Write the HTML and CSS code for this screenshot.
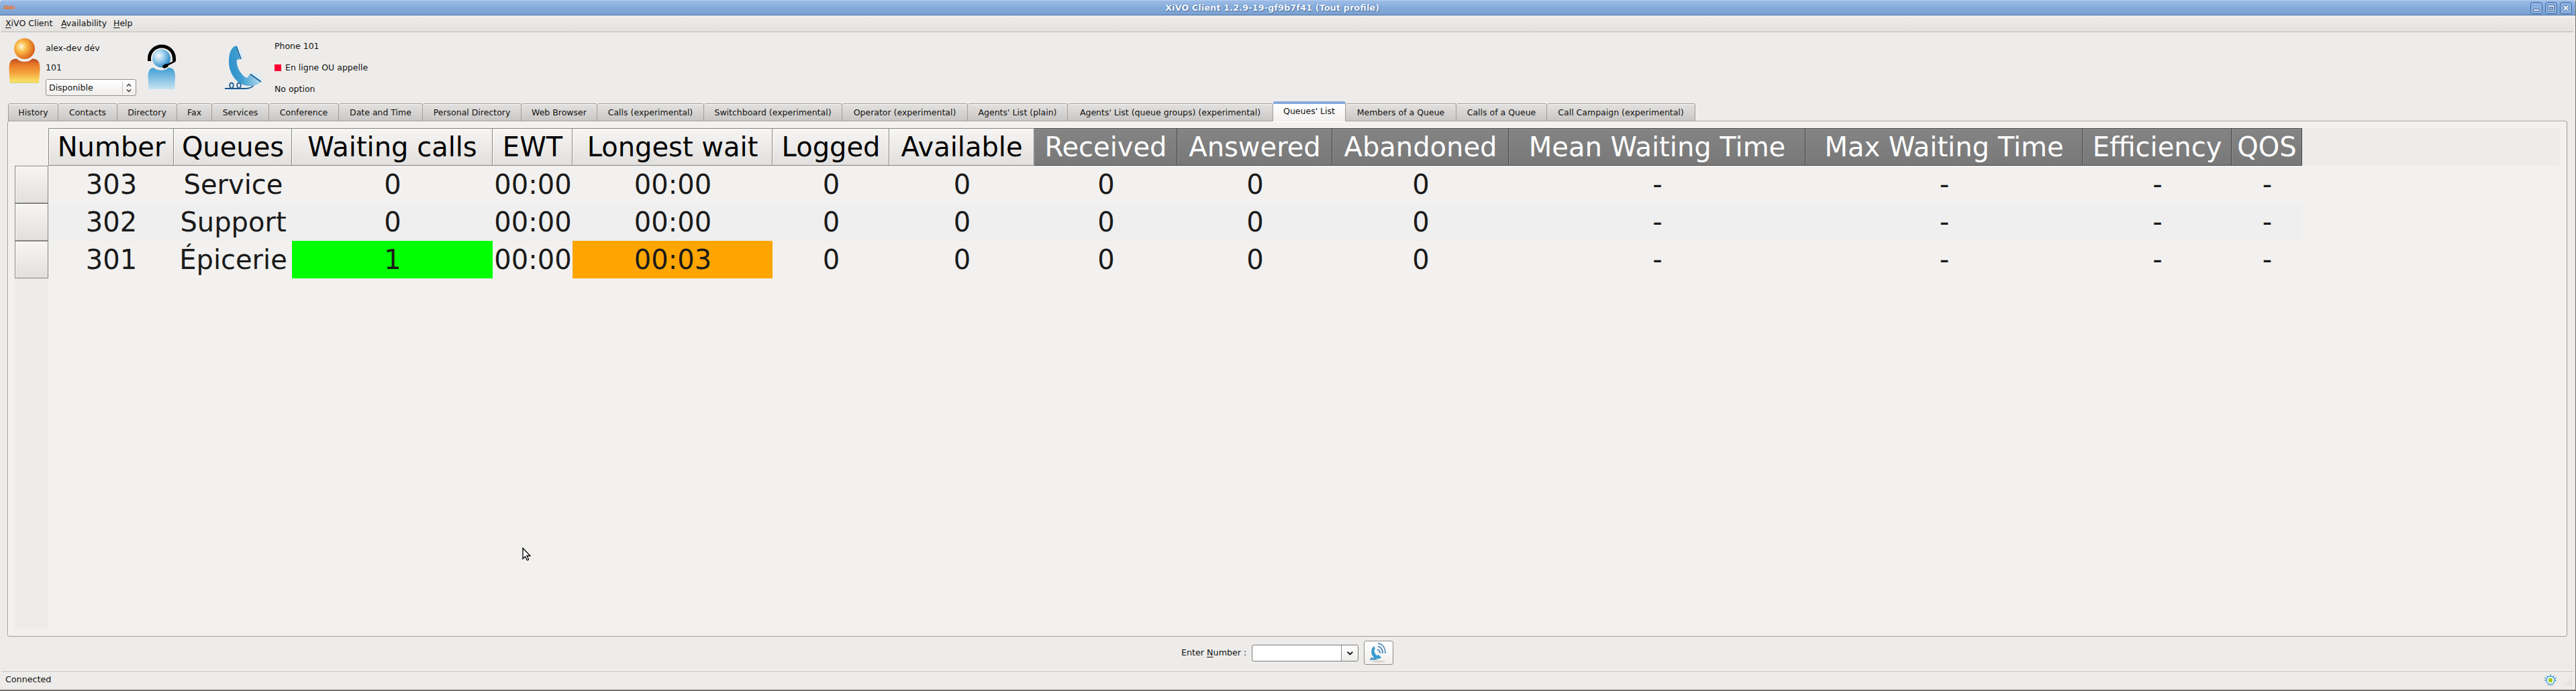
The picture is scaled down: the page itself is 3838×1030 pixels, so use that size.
FILE: index.html
```html
<!DOCTYPE html>
<html lang="en">
<head>
<meta charset="utf-8">
<title>XiVO Client</title>
<link rel="stylesheet" href="styles.css">
</head>
<body>
<header class="titlebar">
  <span class="logo">XiVO</span>
  <h1>XiVO Client 1.2.9-19-gf9b7f41 (Tout profile)</h1>
  <div class="winbtns">
    <svg width="18" height="18" viewBox="0 0 18 18"><rect x=".5" y=".5" width="17" height="17" rx="3"/><path class="g" d="M4.5 10.5h9v3h-9z"/></svg>
    <svg width="18" height="18" viewBox="0 0 18 18"><rect x=".5" y=".5" width="17" height="17" rx="3"/><path class="g" fill-rule="evenodd" d="M4.500 4.500h9v9h-9zM6.500 7.500h5v4h-5z"/></svg>
    <svg width="18" height="18" viewBox="0 0 18 18"><rect x=".5" y=".5" width="17" height="17" rx="3"/><path class="g" d="M4.500 6.500l2-2L9 7l2.500-2.500 2 2L11 9l2.500 2.500-2 2L9 11l-2.500 2.500-2-2L7 9z"/></svg>
  </div>
</header>
<nav class="menubar"><span class="m1"><u>X</u>iVO Client</span><span class="m2"><u>A</u>vailability</span><span class="m3"><u>H</u>elp</span></nav>
<section class="identity">
  <svg class="person" width="48" height="70" viewBox="0 0 48 70">
    <defs>
      <radialGradient id="oh" cx=".35" cy=".4" r=".65"><stop offset="0" stop-color="#fffbe0"/><stop offset=".4" stop-color="#f9b845"/><stop offset="1" stop-color="#d9611c"/></radialGradient>
      <linearGradient id="ob" x2="0" y2="1"><stop offset="0" stop-color="#b94b22"/><stop offset=".25" stop-color="#ea7a27"/><stop offset=".6" stop-color="#f5a640"/><stop offset=".92" stop-color="#fadf62"/><stop offset="1" stop-color="#dcd377"/></linearGradient>
    </defs>
    <ellipse cx="24.500" cy="16.500" rx="15.500" ry="15.500" fill="url(#oh)"/>
    <path d="M2.500 68L1.500 47C1.500 36 4 31.500 13 31.500c5 6 18 6 23 0 9 0 11.500 4.500 11.500 15.500L46 68z" fill="url(#ob)"/>
  </svg>
  <div class="user">
    <span class="name">alex-dev dév</span><span class="ext">101</span>
    <div class="select"><span>Disponible</span><svg width="20" height="22" viewBox="0 0 20 22"><path d="M.5 2v18" stroke="#c5c3c0"/><path d="M7 8.500l3-3 3 3M7 13.500l3 3 3-3" fill="none" stroke="#333" stroke-width="1.500"/></svg></div>
  </div>
  <svg class="agent" width="44" height="70" viewBox="0 0 44 70">
    <defs>
      <radialGradient id="bh" cx=".35" cy=".35" r=".7"><stop offset="0" stop-color="#f4fbff"/><stop offset=".5" stop-color="#90c8ea"/><stop offset="1" stop-color="#2585c4"/></radialGradient>
      <linearGradient id="bb" x2="0" y2="1"><stop offset="0" stop-color="#3f9fd2"/><stop offset="1" stop-color="#c7e2f3"/></linearGradient>
    </defs>
    <path d="M2.500 68L1.500 50c0-10 3-14 9-14 4 5 17 5 21 0 8 0 10.500 4 10.500 14l-1 18z" fill="url(#bb)"/>
    <ellipse cx="21.500" cy="22" rx="13.500" ry="13.500" fill="url(#bh)"/>
    <path d="M3.500 26v-4a18.500 18 0 0 1 37 0v4" fill="none" stroke="#000" stroke-width="5"/>
    <path d="M42 26L28 33" stroke="#000" stroke-width="2.500"/><ellipse cx="27.500" cy="33.500" rx="4.500" ry="2.800" transform="rotate(-25 27.500 33.500)"/>
  </svg>
  <svg class="phone" width="58" height="68" viewBox="0 0 58 68">
    <defs><linearGradient id="ph" x1="0" y1=".4" x2="1" y2=".2"><stop offset="0" stop-color="#2f93cb"/><stop offset=".3" stop-color="#3f9dd0"/><stop offset="1" stop-color="#d6ecf7"/></linearGradient></defs>
    <path d="M0 65h8c6 0 6-8.500 2-8.500s-4 8.500 2 8.500h7c6 0 6-8.500 2-8.500s-4 8.500 2 8.500h8q8 0 12-5" fill="none" stroke="#155a94" stroke-width="1.800"/>
    <path d="M16 1C8 5 6 15 6 25c0 18 12 35 30 36 8 0 14-2 17-5l1-1-16-12-5 6C26 47 16 33 18 22l6-1z" fill="url(#ph)"/>
    <path d="M16 1l3-1c5 5 8 14 8 20l-4 2zM38 43l3-2c6 1 12 5 15 10l-2 4z" fill="#d8edf8"/>
    <path d="M17 2l7 19M38 43.500L54 55" stroke="#13558a" stroke-width="1.600"/>
  </svg>
  <div class="line"><span>Phone 101</span><span class="status"><i></i>En ligne OU appelle</span><span>No option</span></div>
</section>
<nav class="tabs">
  <span>History</span><span>Contacts</span><span>Directory</span><span>Fax</span><span>Services</span><span>Conference</span><span>Date and Time</span><span>Personal Directory</span><span>Web Browser</span><span>Calls (experimental)</span><span>Switchboard (experimental)</span><span>Operator (experimental)</span><span>Agents' List (plain)</span><span>Agents' List (queue groups) (experimental)</span><span class="on">Queues' List</span><span>Members of a Queue</span><span>Calls of a Queue</span><span>Call Campaign (experimental)</span>
</nav>
<main class="panel">
  <div class="rowheads"><i></i><i></i><i></i></div>
  <div class="tablewrap">
  <table>
    <colgroup><col class="c1"><col class="c2"><col class="c3"><col class="c4"><col class="c5"><col class="c6"><col class="c7"><col class="c8"><col class="c9"><col class="c10"><col class="c11"><col class="c12"><col class="c13"><col class="c14"></colgroup>
    <thead><tr><th>Number</th><th>Queues</th><th>Waiting calls</th><th>EWT</th><th>Longest wait</th><th>Logged</th><th>Available</th><th class="dk">Received</th><th class="dk">Answered</th><th class="dk">Abandoned</th><th class="dk">Mean Waiting Time</th><th class="dk">Max Waiting Time</th><th class="dk">Efficiency</th><th class="dk">QOS</th></tr></thead>
    <tbody>
      <tr><td>303</td><td>Service</td><td>0</td><td>00:00</td><td>00:00</td><td>0</td><td>0</td><td>0</td><td>0</td><td>0</td><td>-</td><td>-</td><td>-</td><td>-</td></tr>
      <tr><td>302</td><td>Support</td><td>0</td><td>00:00</td><td>00:00</td><td>0</td><td>0</td><td>0</td><td>0</td><td>0</td><td>-</td><td>-</td><td>-</td><td>-</td></tr>
      <tr><td>301</td><td>Épicerie</td><td class="green">1</td><td>00:00</td><td class="orange">00:03</td><td>0</td><td>0</td><td>0</td><td>0</td><td>0</td><td>-</td><td>-</td><td>-</td><td>-</td></tr>
    </tbody>
  </table>
  </div>
</main>
<section class="dial">
  <label>Enter <u>N</u>umber :</label>
  <div class="combo"><svg width="25" height="23" viewBox="0 0 25 23"><path d="M9 9.500l4 4 4-4" fill="none" stroke="#111" stroke-width="2"/></svg></div>
  <div class="call"><svg width="28" height="30" viewBox="0 0 28 30">
    <ellipse cx="14" cy="28" rx="11" ry="1.500" fill="#d8d3cc"/>
    <path d="M7 5C2 9 2 18 7 22c4 3 8 3 11 0l-4-4-3 1C8 16 7 12 8 10l1-1z" fill="#3a9dd0"/>
    <path d="M1 25h2v-2h2v2h2v-2h2v2h2" fill="none" stroke="#2d7fb5" stroke-width="1.300"/>
    <path d="M12 10c3 1 4 3 4 6M13 5.500c5 1 7 5 7 10.500M13 1c8 1 11 8 11 15" fill="none" stroke="#5d94c0" stroke-width="2"/>
  </svg></div>
</section>
<footer class="statusbar"><span>Connected</span>
  <svg class="sun" width="18" height="18" viewBox="0 0 18 18"><path d="M9 0v3M3.500 2l2 3M14.500 2l-2 3M0 5l4 2M18 5l-4 2M0 9h3M18 9h-3" stroke="#5b9cc2" stroke-width="1.300"/><ellipse cx="9" cy="16.300" rx="6" ry="1" fill="#d6d0ca"/><circle cx="9" cy="9" r="6" fill="#fff" stroke="#3fa4d8" stroke-width="1.400"/><circle cx="9" cy="9" r="3.200" fill="#a2c614"/></svg>
  <svg class="grip" width="12" height="12" viewBox="0 0 12 12"><path d="M10 1h1M7 4h1M10 4h1M4 7h1M7 7h1M10 7h1M1 10h1M4 10h1M7 10h1M10 10h1" stroke="#aaa8a5"/></svg>
</footer>
<svg class="cursor" width="14" height="21" viewBox="0 0 14 21"><path d="M1 1v16l3.500-3.500 2.500 5c1 1 3 0 2.500-1l-2.500-5H12z" fill="#fff" stroke="#000" stroke-width="1.300"/></svg>
</body>
</html>
```
FILE: styles.css
```css
* { box-sizing: border-box; }
html, body { margin: 0; }
body { width: 3838px; height: 1030px; overflow: hidden; position: relative; display: flex; flex-direction: column; background: #edecea; border-right: 1px solid #72706d; border-bottom: 2px solid #72706d; font: 12.5px/16px "DejaVu Sans", sans-serif; color: #111; white-space: nowrap; }
u { text-decoration: underline; text-underline-offset: 2px; }
svg { display: block; flex: none; }
.titlebar { height: 23px; flex: none; display: grid; grid-template-columns: 54px 1fr 100px; align-items: center; border-bottom: 1px solid #4670a8; border-top: 1px solid #b4cdeb; border-radius: 4px 4px 0 0; background: linear-gradient(#9cbce7, #85abdb 50%, #7ba0d0); }
.titlebar h1 { margin: 0; text-align: center; font-size: 13px; line-height: 16px; color: #f4f8fd; text-shadow: 1px 1px 1px #466d9f, -1px 0 1px #5b84b8; }
.logo { padding-left: 5px; font: bold 7.5px/10px "DejaVu Sans", sans-serif; letter-spacing: -1px; color: #ef7228; }
.winbtns { display: flex; gap: 4px; justify-content: flex-end; padding-right: 5px; }
.winbtns rect { fill: #8db1df; stroke: #41699f; }
.winbtns .g { fill: #eef4fb; stroke: #41699f; }
.menubar { height: 25px; flex: none; margin: 0 3px 0 2px; padding: 4px 0 0 6px; display: flex; border-bottom: 1px solid #bdbbb8; background: linear-gradient(#edecea, #e3e2df); }
.m1 { width: 83px; }
.m2 { width: 78px; }
.identity { height: 103px; flex: none; display: flex; align-items: flex-start; }
.person { margin: 8px 0 0 12px; }
.user { width: 135px; height: 100px; margin-left: 8px; display: flex; flex-direction: column; align-items: flex-start; padding-top: 16px; }
.ext { margin-top: 13px; }
.select { width: 135px; height: 25px; margin-top: 9px; padding: 0 0 0 4px; display: flex; align-items: center; justify-content: space-between; border: 1px solid #94918d; border-radius: 3px; background: linear-gradient(#fff, #efeeec); }
.agent { margin: 17px 0 0 16px; }
.phone { margin: 19px 0 0 72px; }
.line { display: flex; flex-direction: column; gap: 16px; padding: 13px 0 0 16px; }
.status { display: flex; align-items: center; gap: 6px; }
.status i { width: 10px; height: 10px; background: #ff0032; }
.tabs { position: relative; z-index: 1; height: 30px; flex: none; margin-left: 12px; display: grid; align-items: end; grid-template-columns: 75px 88px 89px 52px 85px 104px 125px 147px 113px 159px 206px 187px 149px 306px 108px 165px 135px 221px; }
.tabs span { height: 27px; padding-top: 5px; text-align: center; border: solid #a19f9c; border-width: 1px 1px 1px 0; border-radius: 3px 3px 0 0; box-shadow: inset 0 1px #f7f6f5; background: linear-gradient(#e3e2e0, #c9c7c5); }
.tabs span:first-child { border-left-width: 1px; }
.tabs .on { height: 30px; padding-top: 3px; border-top: 4px solid #83aadb; border-bottom: 0; background: linear-gradient(#fff, #f2f1ef); box-shadow: none; }
.panel { height: 769px; flex: none; margin: -1px 12px 0 11px; padding: 10px; display: flex; border: 1px solid #a19f9c; border-radius: 3px; background: #f2f1ef; box-shadow: inset 1px 1px #fff; }
.rowheads { width: 50px; height: 690px; margin-top: 56px; background: #edecea; }
.rowheads i { display: block; height: 56px; border: 1px solid #858381; background: linear-gradient(#f6f5f4, #e1e0de); box-shadow: inset 1px 1px #fff; }
.tablewrap { flex: 1; height: 56px; background: #edecea; }
table { width: 3358px; table-layout: fixed; border-collapse: separate; border-spacing: 0; font-size: 40px; line-height: 46px; background: #f2f1ef; }
.c1 { width: 187px; }
.c2 { width: 176px; }
.c3 { width: 299px; }
.c4 { width: 119px; }
.c5 { width: 298px; }
.c6 { width: 174px; }
.c7 { width: 216px; }
.c8 { width: 213px; }
.c9 { width: 231px; }
.c10 { width: 263px; }
.c11 { width: 442px; }
.c12 { width: 413px; }
.c13 { width: 222px; }
.c14 { width: 105px; }
th, td { height: 56px; padding: 0 0 0 1px; text-align: center; font-weight: 400; }
th { color: #000; border: solid #858381; border-width: 1px 1px 1px 0; background: linear-gradient(#f6f5f4, #e1e0de); box-shadow: inset 1px 1px #fff; }
th:first-child { border-left-width: 1px; }
th.dk { color: #fff; border-color: #484848; background: linear-gradient(#848484, #787878); box-shadow: inset 1px 1px #8e8e8e; }
td { color: #1a1a1a; }
tbody tr:nth-child(2) { background: #efefef; }
td.green { background: #0f0; }
td.orange { background: #ffa500; }
.dial { height: 53px; flex: none; margin: 0 3px 0 2px; padding: 6px 0 0 1758px; display: flex; border-bottom: 1px solid #bdbbb8; box-shadow: 0 1px #fff; }
.dial label { width: 105px; padding-top: 10px; }
.combo { width: 159px; height: 25px; margin-top: 6px; display: flex; justify-content: flex-end; border: 1px solid #7e7b78; border-radius: 3px; background: #fff; }
.combo svg { border-left: 1px solid #8f8c89; background: linear-gradient(#fff, #eeedeb); border-radius: 0 3px 3px 0; }
.call { width: 44px; height: 36px; margin-left: 8px; display: flex; justify-content: center; align-items: center; border: 1px solid #8f8c89; border-radius: 3px; background: linear-gradient(#fff, #f0efed); }
.statusbar { height: 24px; display: flex; padding: 0 5px 0 8px; align-items: flex-start; }
.statusbar span { flex: 1; padding-top: 3px; }
.sun { margin: 3px 11px 0 0; }
.grip { margin-top: 9px; }
.dial label, .statusbar span { font-size: 12.7px; }
.cursor { position: absolute; left: 778px; top: 816px; }
```
